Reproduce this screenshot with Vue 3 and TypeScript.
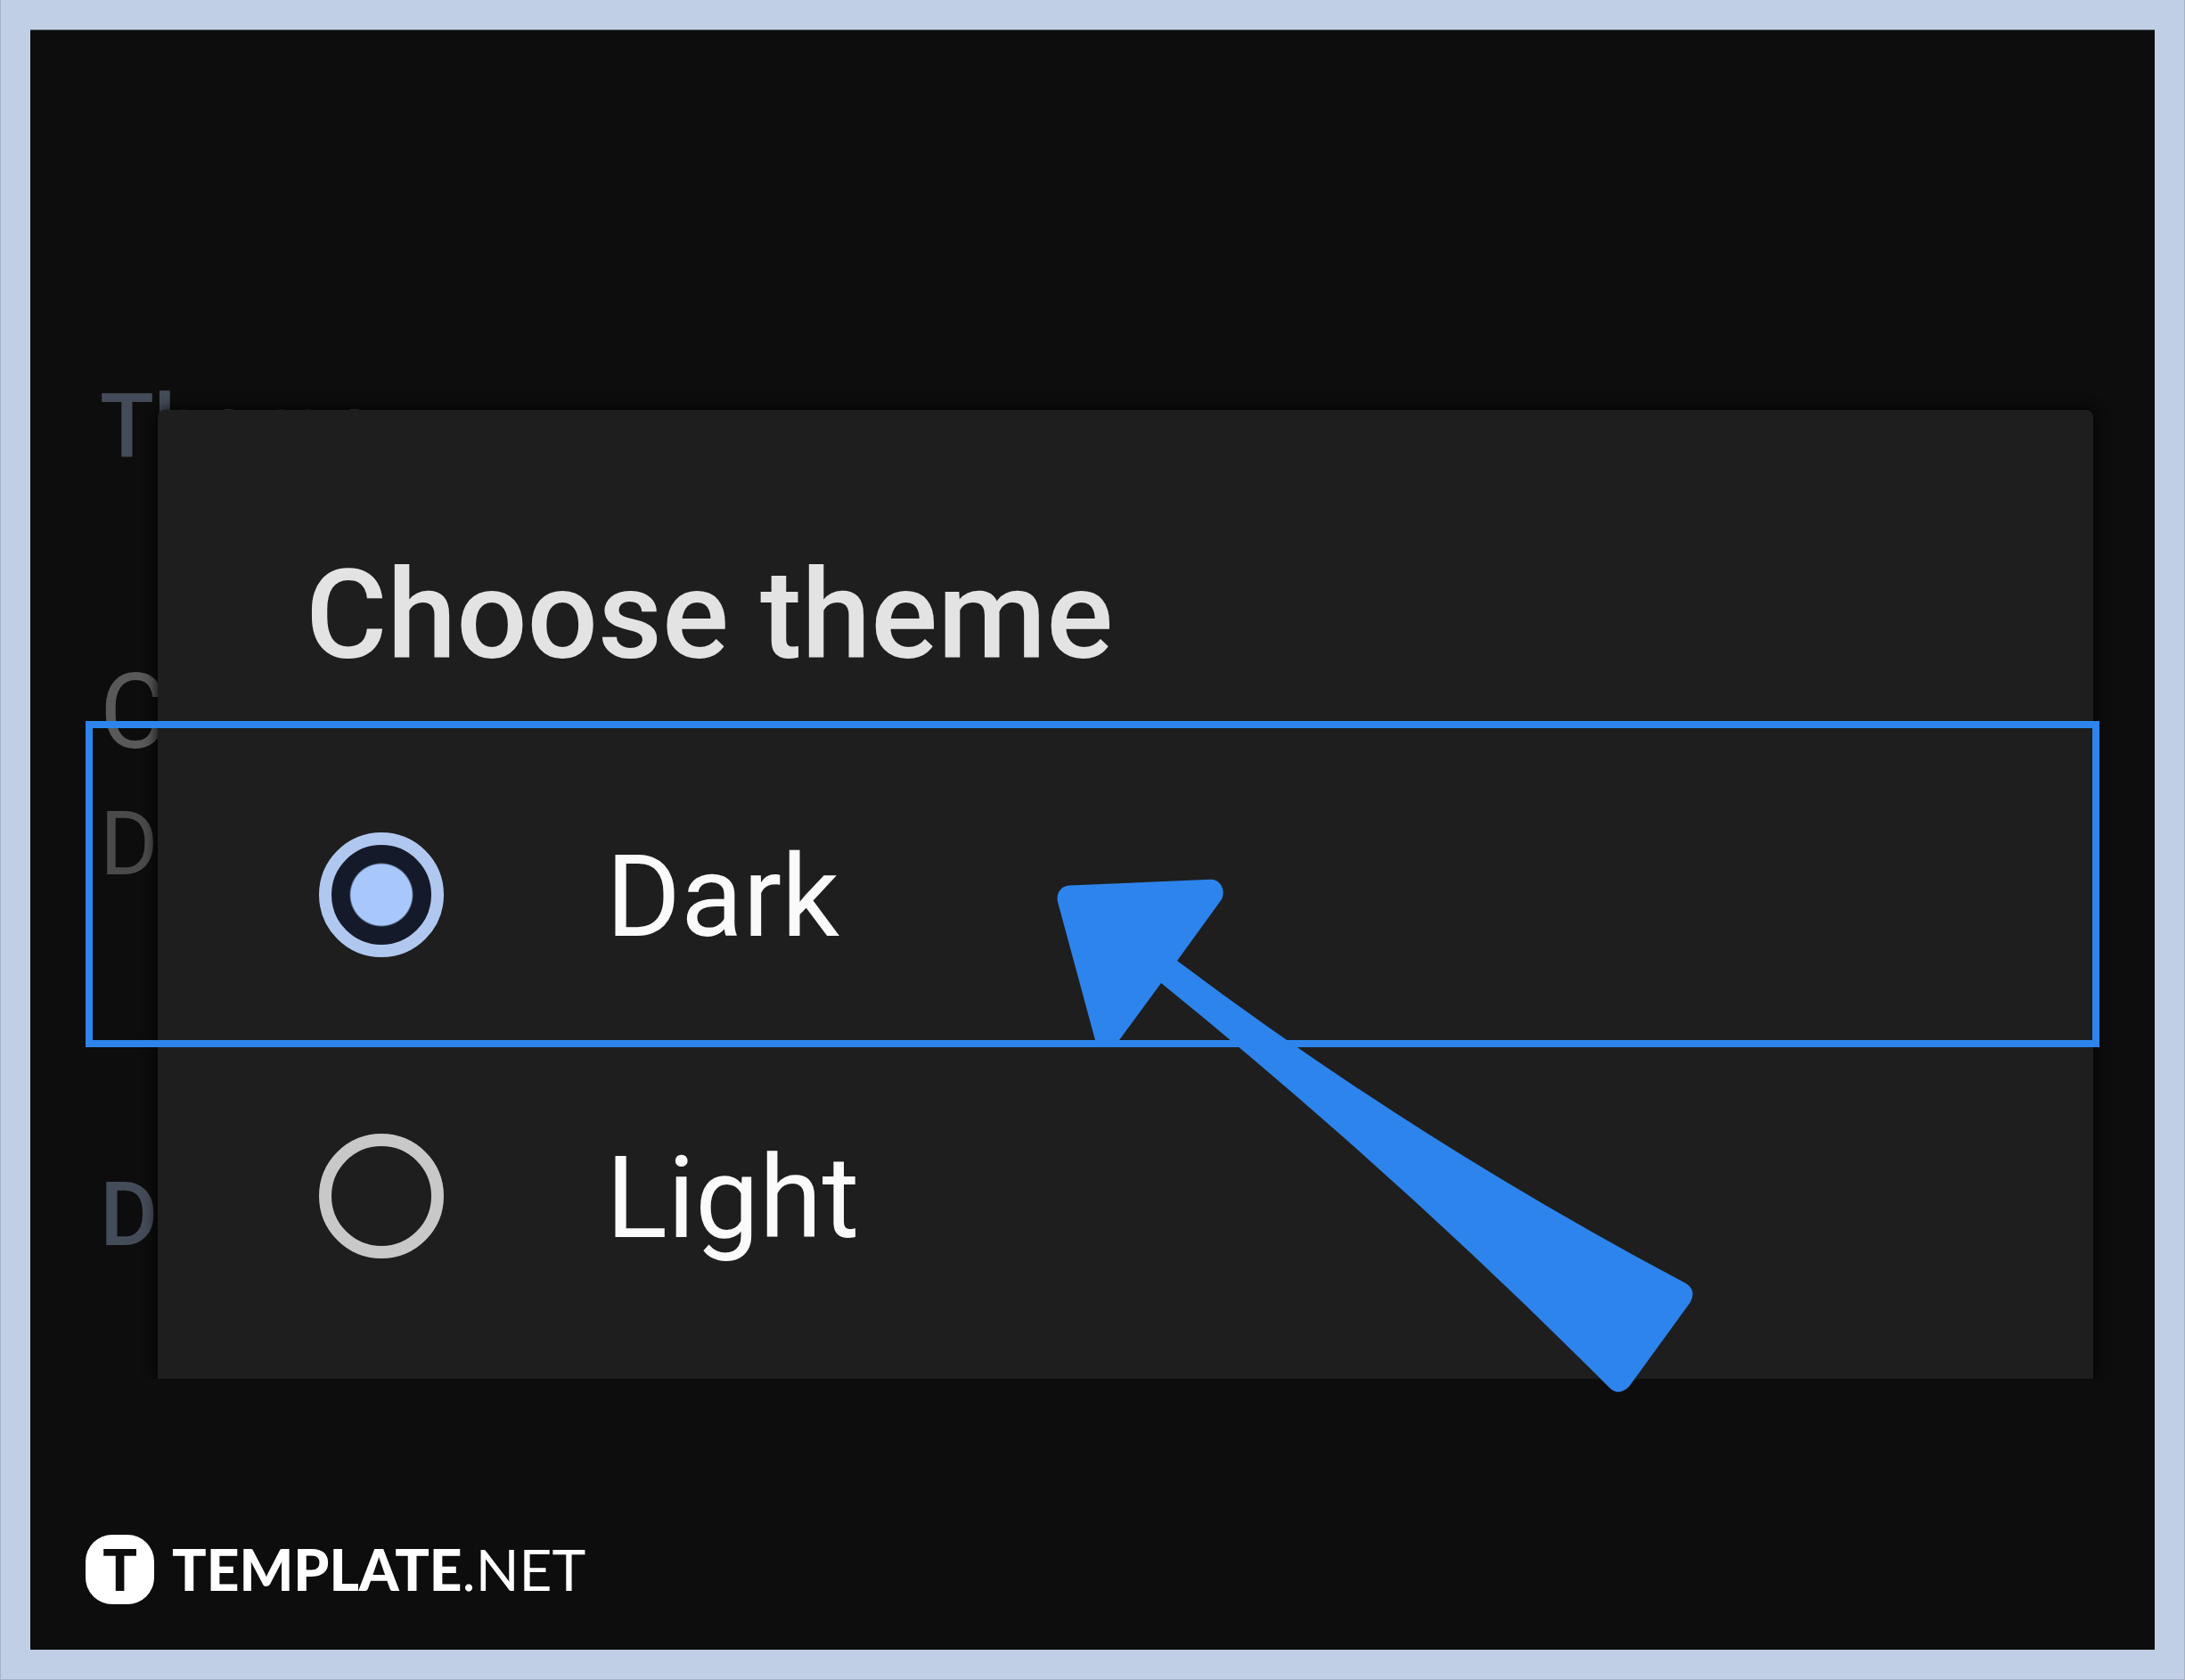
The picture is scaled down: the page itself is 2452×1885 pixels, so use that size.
<script setup lang="ts">
import { ref } from 'vue'

interface ThemeOption {
  id: string
  label: string
}

const options: ThemeOption[] = [
  { id: 'dark', label: 'Dark' },
  { id: 'light', label: 'Light' },
]

const selected = ref('dark')
</script>

<template>
  <div class="frame">
    <main class="screen">
      <div class="scene">
        <div class="settings" aria-hidden="true">
          <p class="heading">Theme</p>
          <p class="entry">C</p>
          <p class="value">D</p>
          <p class="heading second">D</p>
        </div>

        <form class="dialog" aria-labelledby="dialog-title">
          <h1 id="dialog-title" class="title">Choose theme</h1>
          <div
            v-for="option in options"
            :key="option.id"
            class="option"
            :class="{ highlighted: option.id === 'dark' }"
          >
            <input
              :id="option.id"
              v-model="selected"
              class="radio"
              type="radio"
              name="theme"
              :value="option.id"
            />
            <label class="label" :for="option.id">{{ option.label }}</label>
          </div>
        </form>

        <svg class="arrow" width="716" height="578" viewBox="1186 986 716 578" aria-hidden="true">
          <path
            fill="#2d84ec"
            d="M1200 993.5L1358 986.7C1369 986 1376 998 1371 1009L1321 1078Q1590 1280 1892 1440Q1904 1448 1897 1461L1828 1556Q1816 1567 1806 1557Q1566 1316 1303 1103L1256 1167Q1251 1175 1241 1175Q1231 1175 1229 1167L1187 1012C1185 1003 1190 994 1200 993.5Z"
          />
        </svg>
      </div>

      <footer class="brand">
        <span class="badge" aria-hidden="true">T</span>
        <span class="name"><b>TEMPLATE</b>.NET</span>
      </footer>
    </main>
  </div>
</template>

<style>
body {
  margin: 0;
}
</style>

<style scoped>
.frame {
  box-sizing: border-box;
  display: flex;
  min-height: 100vh;
  padding: 33px;
  border: 1px solid #a7b3c4;
  border-top: 0;
  background: #c0cfe5;
  font-family: Roboto, "Liberation Sans", sans-serif;
}

.screen {
  display: flex;
  flex: 1;
  flex-direction: column;
  border-top: 1px solid #64707c;
  background: #0d0d0d;
}

.scene {
  position: relative;
  display: grid;
}

.settings,
.dialog {
  grid-area: 1 / 1;
}

.settings {
  padding: 395px 0 0 78px;
}

.settings p {
  margin: 0;
}

.heading {
  color: #454c59;
  font-size: 100px;
  font-weight: 500;
  line-height: 100px;
}

.entry {
  padding-top: 210px;
  color: #595959;
  font-size: 116px;
  font-weight: 400;
  line-height: 120px;
}

.value {
  padding-top: 38px;
  color: #4a4a4a;
  font-size: 100px;
  line-height: 100px;
}

.second {
  padding-top: 316px;
}

.dialog {
  position: relative;
  align-self: start;
  margin: 426px 69px 0 143px;
  padding: 150px 0 36px;
  border-radius: 8px 8px 0 0;
  background: #1e1e1e;
  box-shadow: 0 0 16px #000;
  clip-path: inset(-30px -30px 0 -90px);
}

.title {
  margin: 0 0 65px;
  padding-left: 166px;
  color: #e3e3e3;
  font-size: 140px;
  font-weight: 500;
  line-height: 160px;
}

.option {
  position: relative;
  display: flex;
  align-items: center;
  gap: 182px;
  height: 338px;
  padding-left: 181px;
}

.highlighted::after {
  position: absolute;
  inset: -26px -7px -2px -81px;
  border: 8px solid #2d84ec;
  content: "";
  pointer-events: none;
}

.radio {
  box-sizing: border-box;
  flex: none;
  width: 140px;
  height: 140px;
  margin: 0;
  border: 14px solid #c8c8c8;
  border-radius: 50%;
  appearance: none;
}

.radio:checked {
  border-color: #b0c8ef;
  background: radial-gradient(circle, #a8c7fa 34px, #141a29 36px);
}

.label {
  padding-top: 4px;
  color: #fafafa;
  font-size: 128px;
  line-height: 160px;
}

.arrow {
  position: absolute;
  top: 952px;
  left: 1152px;
}

.brand {
  display: flex;
  align-items: center;
  gap: 20px;
  margin-top: auto;
  padding: 0 0 51px 62px;
  color: #fff;
  font-family: Lato, "Liberation Sans", sans-serif;
}

.badge {
  width: 77px;
  border-radius: 30px;
  background: #fff;
  color: #0d0d0d;
  font-size: 64px;
  font-weight: 900;
  line-height: 78px;
  text-align: center;
}

.name {
  font-size: 64px;
  font-weight: 400;
  line-height: 78px;
}

.name b {
  font-weight: 900;
}
</style>
